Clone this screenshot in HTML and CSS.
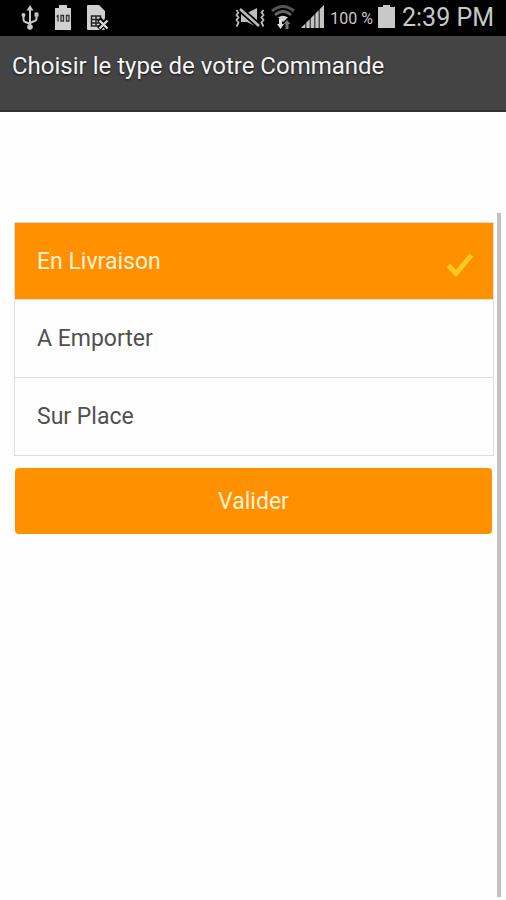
FILE: index.html
```html
<!DOCTYPE html>
<html lang="fr">
<head>
<meta charset="utf-8">
<meta name="viewport" content="width=device-width, initial-scale=1">
<title>Choisir le type de votre Commande</title>
<link rel="stylesheet" href="styles.css">
</head>
<body>
<div class="status">
  <div class="status-left">
    <svg width="18" height="26" viewBox="0 0 18 26" fill="none" stroke="#c8c8c8" stroke-width="2">
      <path d="M9 4v17M2.500 11v3.500q0 2 2 2.500L9 19M15.500 10v3.500q0 2-2 2.500L9 18"/>
      <path d="M9 0l3.500 5.500h-7z" fill="#c8c8c8" stroke="none"/>
      <circle cx="9" cy="22" r="2.800" fill="#c8c8c8" stroke="none"/>
      <circle cx="2.500" cy="10" r="2" fill="#c8c8c8" stroke="none"/>
      <path d="M13.500 7.500h4v4h-4z" fill="#c8c8c8" stroke="none"/>
    </svg>
    <svg width="16" height="26" viewBox="0 0 16 26">
      <path d="M4 0h8v3h4v22H0V3h4z" fill="#d0d0d0"/>
      <path d="M1.500 11.500l1.500-1v6M6 10.500h2.500v5.500H6zM11.500 10.500H14v5.500h-2.500z" fill="none" stroke="#333" stroke-width="1.300"/>
    </svg>
    <svg width="22" height="26" viewBox="0 0 22 26">
      <path d="M0 1q0-1 1-1h11l6 6v18q0 1-1 1H1q-1 0-1-1z" fill="#d0d0d0"/>
      <path d="M4.500 11h9v10h-9zM4.500 14.500h9M4.500 18h9M9 11v10" fill="none" stroke="#222" stroke-width="1.500"/>
      <path d="M12 14l9 10M21 14l-9 10" stroke="#000" stroke-width="5"/>
      <path d="M12.500 15.500l8 8M20.500 15.500l-8 8" stroke="#d8d8d8" stroke-width="2.400"/>
    </svg>
  </div>
  <div class="status-right">
    <svg width="30" height="26" viewBox="0 0 30 26" fill="none" stroke="#bdbdbd" stroke-width="1.800">
      <path d="M1.500 5l2 2.500-2 2.500 2 2.500-2 2.500 2 2.500-2 4M28.500 5l-2 2.500 2 2.500-2 2.500 2 2.500-2 2.500 2 4"/>
      <path d="M6 8h6l10-5v19l-10-5H6z" fill="#bdbdbd" stroke="none"/>
      <path d="M5 4l19 17" stroke="#000" stroke-width="6"/>
      <path d="M5 4l19 17" stroke-width="2.600"/>
    </svg>
    <svg width="26" height="26" viewBox="0 0 26 26" fill="none">
      <path d="M2 6q11-9 22 0" stroke="#555" stroke-width="3"/>
      <path d="M5 10q8-7 16 0" stroke="#666" stroke-width="2.800"/>
      <path d="M8 12.500q5-3.500 10 0l-5 4.500z" fill="#d0d0d0"/>
      <path d="M9 14h3v5h2l-3.500 5L7 19h2z" fill="#ddd"/>
      <path d="M15.500 24v-5h-2l3.500-4 3.500 4h-2v5z" fill="#777"/>
    </svg>
    <svg width="24" height="26" viewBox="0 0 24 26">
      <path d="M0 23l4-4v4zM5.500 17.500l3-3V23h-3zM10 13l3-3v13h-3zM14.500 8.500l3-3V23h-3zM19 4l4-4v23h-4z" fill="#c4c4c4"/>
      <path d="M0 23L23 0v23z" fill="#c4c4c4" opacity=".4"/>
    </svg>
    <span class="percent">100 %</span>
    <svg width="17" height="26" viewBox="0 0 17 26"><path d="M5 0h7v2h5v21H0V2h5z" fill="#c8c8c8"/></svg>
    <span class="clock">2:39 PM</span>
  </div>
</div>
<header class="header"><h1 class="title">Choisir le type de votre Commande</h1></header>
<main class="main">
  <form class="form">
    <div class="options" role="radiogroup" aria-label="Type de commande">
      <label class="option"><input class="radio" type="radio" name="type" checked>
        <span>En Livraison</span>
        <svg class="check" width="28" height="32" viewBox="0 0 28 32"><path d="M2.500 20.500l7.500 8L25.500 10" fill="none" stroke="#fdca1b" stroke-width="5"/></svg>
      </label>
      <label class="option"><input class="radio" type="radio" name="type">
        <span>A Emporter</span>
        <svg class="check" width="28" height="32" viewBox="0 0 28 32"><path d="M2.500 20.500l7.500 8L25.500 10" fill="none" stroke="#fdca1b" stroke-width="5"/></svg>
      </label>
      <label class="option"><input class="radio" type="radio" name="type">
        <span>Sur Place</span>
        <svg class="check" width="28" height="32" viewBox="0 0 28 32"><path d="M2.500 20.500l7.500 8L25.500 10" fill="none" stroke="#fdca1b" stroke-width="5"/></svg>
      </label>
    </div>
    <button class="submit" type="button">Valider</button>
  </form>
  <div class="scrollbar"></div>
</main>
</body>
</html>
```
FILE: styles.css
```css
* {
  box-sizing: border-box;
}

body {
  display: flex;
  flex-direction: column;
  min-height: 100vh;
  margin: 0;
  background: #fefefe;
  color: #505050;
  font-family: Roboto, sans-serif;
  font-size: 23px;
}

.status {
  display: flex;
  align-items: center;
  justify-content: space-between;
  height: 36px;
  padding: 0 12px 0 21px;
  background: #000;
  color: #c8c8c8;
}

.status-left,
.status-right {
  display: flex;
  align-items: center;
}

.status-left {
  gap: 16px;
}

.status-right {
  gap: 5px;
}

.percent {
  font-size: 16px;
}

.clock {
  padding-left: 2px;
  font-size: 25px;
  line-height: 36px;
}

.header {
  padding: 14px 12px 28px;
  background: #444;
  border-bottom: 2px solid #303030;
}

.title {
  margin: 0;
  color: #f6f6f6;
  font-size: 24px;
  font-weight: 400;
  line-height: 32px;
  text-shadow: 0 1px 2px #111;
}

.main {
  position: relative;
  flex: 1;
  padding: 110px 12px 0 14px;
}

.form {
  display: flex;
  flex-direction: column;
  gap: 12px;
}

.options {
  border: 1px solid #ddd;
}

.option {
  display: flex;
  align-items: center;
  justify-content: space-between;
  min-height: 76px;
  padding: 0 19px 0 22px;
  cursor: pointer;
}

.option + .option {
  min-height: 78px;
  border-top: 1px solid #ddd;
}

.option:has(.radio:checked) {
  background: #ff9000;
  color: #fff0d8;
}

.radio {
  position: absolute;
  opacity: 0;
}

.check {
  visibility: hidden;
}

.radio:checked ~ .check {
  visibility: visible;
}

.submit {
  min-height: 66px;
  margin: 0 2px 0 1px;
  border: 0;
  border-radius: 4px;
  background: #ff9000;
  color: #fff0d8;
  font: inherit;
  cursor: pointer;
}

.scrollbar {
  position: absolute;
  top: 101px;
  right: 5px;
  bottom: 3px;
  width: 4px;
  background: #c0c0c0;
}
```
